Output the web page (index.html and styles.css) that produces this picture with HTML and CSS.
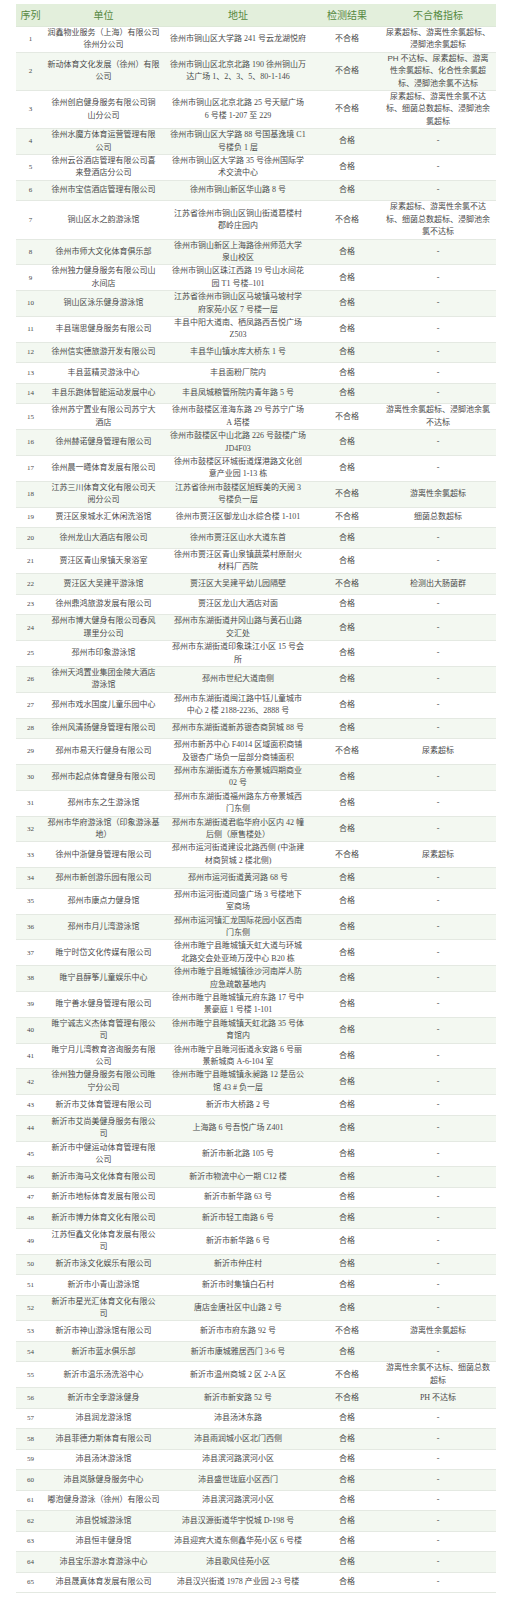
FILE: index.html
```html
<!DOCTYPE html>
<html lang="zh-CN">
<head>
<meta charset="utf-8">
<title>检测结果</title>
<link rel="stylesheet" href="styles.css">
</head>
<body>
<table class="report">
<colgroup>
<col class="c-no"><col class="c-unit"><col class="c-addr"><col class="c-res"><col class="c-ind">
</colgroup>
<thead>
<tr><th>序列</th><th>单位</th><th>地址</th><th>检测结果</th><th>不合格指标</th></tr>
</thead>
<tbody>
<tr><td class="no">1</td><td>润鑫物业服务（上海）有限公司<br>徐州分公司</td><td>徐州市铜山区大学路 241 号云龙湖悦府</td><td>不合格</td><td>尿素超标、游离性余氯超标、<br>浸脚池余氯超标</td></tr>
<tr><td class="no">2</td><td>新动体育文化发展（徐州）有限<br>公司</td><td>徐州市铜山区北京北路 190 徐州铜山万<br>达广场 1、2、3、5、80-1-146</td><td>不合格</td><td><span class="sans">PH</span> 不达标、尿素超标、游离<br>性余氯超标、化合性余氯超<br>标、浸脚池余氯不达标</td></tr>
<tr><td class="no">3</td><td>徐州创启健身服务有限公司铜<br>山分公司</td><td>徐州市铜山区北京北路 25 号天赋广场<br>6 号楼 1-207 至 229</td><td>不合格</td><td>尿素超标、游离性余氯不达<br>标、细菌总数超标、浸脚池余<br>氯超标</td></tr>
<tr><td class="no">4</td><td>徐州水魔方体育运营管理有限<br>公司</td><td>徐州市铜山区大学路 88 号国基逸境 C1<br>号楼负 1 层</td><td>合格</td><td>-</td></tr>
<tr><td class="no">5</td><td>徐州云谷酒店管理有限公司喜<br>来登酒店分公司</td><td>徐州市铜山区大学路 35 号徐州国际学<br>术交流中心</td><td>合格</td><td>-</td></tr>
<tr><td class="no">6</td><td>徐州市宝信酒店管理有限公司</td><td>徐州市铜山新区华山路 8 号</td><td>合格</td><td>-</td></tr>
<tr><td class="no">7</td><td>铜山区水之韵游泳馆</td><td>江苏省徐州市铜山区铜山街道葛楼村<br>郡岭庄园内</td><td>不合格</td><td>尿素超标、游离性余氯不达<br>标、细菌总数超标、浸脚池余<br>氯不达标</td></tr>
<tr><td class="no">8</td><td>徐州市师大文化体育俱乐部</td><td>徐州市铜山新区上海路徐州师范大学<br>泉山校区</td><td>合格</td><td>-</td></tr>
<tr><td class="no">9</td><td>徐州独力健身服务有限公司山<br>水间店</td><td>徐州市铜山区珠江西路 19 号山水间花<br>园 T1 号楼–101</td><td>合格</td><td>-</td></tr>
<tr><td class="no">10</td><td>铜山区泳乐健身游泳馆</td><td>江苏省徐州市铜山区马坡镇马坡村学<br>府家苑小区 7 号楼一层</td><td>合格</td><td>-</td></tr>
<tr><td class="no">11</td><td>丰县瑞思健身服务有限公司</td><td>丰县中阳大道南、栖凤路西吾悦广场<br>Z503</td><td>合格</td><td>-</td></tr>
<tr><td class="no">12</td><td>徐州信实德旅游开发有限公司</td><td>丰县华山镇水库大桥东 1 号</td><td>合格</td><td>-</td></tr>
<tr><td class="no">13</td><td>丰县蓝精灵游泳中心</td><td>丰县面粉厂院内</td><td>合格</td><td>-</td></tr>
<tr><td class="no">14</td><td>丰县乐跑体智能运动发展中心</td><td>丰县凤城粮管所院内青年路 5 号</td><td>合格</td><td>-</td></tr>
<tr><td class="no">15</td><td>徐州苏宁置业有限公司苏宁大<br>酒店</td><td>徐州市鼓楼区淮海东路 29 号苏宁广场<br>A 塔楼</td><td>不合格</td><td>游离性余氯超标、浸脚池余氯<br>不达标</td></tr>
<tr><td class="no">16</td><td>徐州赫诺健身管理有限公司</td><td>徐州市鼓楼区中山北路 226 号鼓楼广场<br>JD4F03</td><td>合格</td><td>-</td></tr>
<tr><td class="no">17</td><td>徐州晨一曦体育发展有限公司</td><td>徐州市鼓楼区环城街道煤港路文化创<br>意产业园 1-13 栋</td><td>合格</td><td>-</td></tr>
<tr><td class="no">18</td><td>江苏三川体育文化有限公司天<br>阅分公司</td><td>江苏省徐州市鼓楼区旭辉美的天阅 3<br>号楼负一层</td><td>不合格</td><td>游离性余氯超标</td></tr>
<tr><td class="no">19</td><td>贾汪区泉城水汇休闲洗浴馆</td><td>徐州市贾汪区御龙山水综合楼 1-101</td><td>不合格</td><td>细菌总数超标</td></tr>
<tr><td class="no">20</td><td>徐州龙山大酒店有限公司</td><td>徐州市贾汪区山水大道东首</td><td>合格</td><td>-</td></tr>
<tr><td class="no">21</td><td>贾汪区青山泉镇天泉浴室</td><td>徐州市贾汪区青山泉镇蔬菜村原耐火<br>材料厂西院</td><td>合格</td><td>-</td></tr>
<tr><td class="no">22</td><td>贾汪区大吴建平游泳馆</td><td>贾汪区大吴建平幼儿园隔壁</td><td>不合格</td><td>检测出大肠菌群</td></tr>
<tr><td class="no">23</td><td>徐州鼎鸿旅游发展有限公司</td><td>贾汪区龙山大酒店对面</td><td>合格</td><td>-</td></tr>
<tr><td class="no">24</td><td>邳州市博大健身有限公司春风<br>璟里分公司</td><td>邳州市东湖街道井冈山路与黄石山路<br>交汇处</td><td>合格</td><td>-</td></tr>
<tr><td class="no">25</td><td>邳州市印象游泳馆</td><td>邳州市东湖街道印象珠江小区 15 号会<br>所</td><td>合格</td><td>-</td></tr>
<tr><td class="no">26</td><td>徐州天鸿置业集团金陵大酒店<br>游泳馆</td><td>邳州市世纪大道南侧</td><td>合格</td><td>-</td></tr>
<tr><td class="no">27</td><td>邳州市戏水国度儿童乐园中心</td><td>邳州市东湖街道闽江路中钰儿童城市<br>中心 2 楼 2188-2236、2888 号</td><td>合格</td><td>-</td></tr>
<tr><td class="no">28</td><td>徐州风清扬健身管理有限公司</td><td>邳州市东湖街道新苏银杏商贸城 88 号</td><td>合格</td><td>-</td></tr>
<tr><td class="no">29</td><td>邳州市易天行健身有限公司</td><td>邳州市新苏中心 F4014 区域面积商铺<br>及银杏广场负一层部分商铺面积</td><td>不合格</td><td>尿素超标</td></tr>
<tr><td class="no">30</td><td>邳州市起点体育健身有限公司</td><td>邳州市东湖街道东方帝景城四期商业<br>02 号</td><td>合格</td><td>-</td></tr>
<tr><td class="no">31</td><td>邳州市东之生游泳馆</td><td>邳州市东湖街道福州路东方帝景城西<br>门东侧</td><td>合格</td><td>-</td></tr>
<tr><td class="no">32</td><td>邳州市华府游泳馆（印象游泳基<br>地）</td><td>邳州市东湖街道君临华府小区内 42 幢<br>后侧（原售楼处）</td><td>合格</td><td>-</td></tr>
<tr><td class="no">33</td><td>徐州中浙健身管理有限公司</td><td>邳州市运河街道建设北路西侧 (中浙建<br>材商贸城 2 楼北侧)</td><td>不合格</td><td>尿素超标</td></tr>
<tr><td class="no">34</td><td>邳州市新创游乐园有限公司</td><td>邳州市运河街道黄河路 68 号</td><td>合格</td><td>-</td></tr>
<tr><td class="no">35</td><td>邳州市康点力健身馆</td><td>邳州市运河街道同盛广场 3 号楼地下<br>室商场</td><td>合格</td><td>-</td></tr>
<tr><td class="no">36</td><td>邳州市月儿湾游泳馆</td><td>邳州市运河镇汇龙国际花园小区西南<br>门东侧</td><td>合格</td><td>-</td></tr>
<tr><td class="no">37</td><td>睢宁时岱文化传媒有限公司</td><td>徐州市睢宁县睢城镇天虹大道与环城<br>北路交会处亚琦万茂中心 B20 栋</td><td>合格</td><td>-</td></tr>
<tr><td class="no">38</td><td>睢宁县醇筝儿童娱乐中心</td><td>徐州市睢宁县睢城镇徐沙河南岸人防<br>应急疏散基地内</td><td>合格</td><td>-</td></tr>
<tr><td class="no">39</td><td>睢宁善水健身管理有限公司</td><td>徐州市睢宁县睢城镇元府东路 17 号中<br>景豪庭 1 号楼 1-101</td><td>合格</td><td>-</td></tr>
<tr><td class="no">40</td><td>睢宁诚志义杰体育管理有限公<br>司</td><td>徐州市睢宁县睢城镇天虹北路 35 号体<br>育馆内</td><td>合格</td><td>-</td></tr>
<tr><td class="no">41</td><td>睢宁月儿湾教育咨询服务有限<br>公司</td><td>徐州市睢宁县睢河街道永安路 6 号丽<br>景新城商 A-6-104 室</td><td>合格</td><td>-</td></tr>
<tr><td class="no">42</td><td>徐州独力健身服务有限公司睢<br>宁分公司</td><td>徐州市睢宁县睢城镇永昶路 12 楚岳公<br>馆 43 # 负一层</td><td>合格</td><td>-</td></tr>
<tr><td class="no">43</td><td>新沂市艾体育管理有限公司</td><td>新沂市大桥路 2 号</td><td>合格</td><td>-</td></tr>
<tr><td class="no">44</td><td>新沂市艾尚美健身服务有限公<br>司</td><td>上海路 6 号吾悦广场 Z401</td><td>合格</td><td>-</td></tr>
<tr><td class="no">45</td><td>新沂市中健运动体育管理有限<br>公司</td><td>新沂市新北路 105 号</td><td>合格</td><td>-</td></tr>
<tr><td class="no">46</td><td>新沂市海马文化体育有限公司</td><td>新沂市物流中心一期 C12 楼</td><td>合格</td><td>-</td></tr>
<tr><td class="no">47</td><td>新沂市地标体育发展有限公司</td><td>新沂市新华路 63 号</td><td>合格</td><td>-</td></tr>
<tr><td class="no">48</td><td>新沂市博力体育文化有限公司</td><td>新沂市轻工南路 6 号</td><td>合格</td><td>-</td></tr>
<tr><td class="no">49</td><td>江苏恒鑫文化体育发展有限公<br>司</td><td>新沂市新华路 6 号</td><td>合格</td><td>-</td></tr>
<tr><td class="no">50</td><td>新沂市泳文化娱乐有限公司</td><td>新沂市仲庄村</td><td>合格</td><td>-</td></tr>
<tr><td class="no">51</td><td>新沂市小青山游泳馆</td><td>新沂市时集镇白石村</td><td>合格</td><td>-</td></tr>
<tr><td class="no">52</td><td>新沂市星光汇体育文化有限公<br>司</td><td>唐店金唐社区中山路 2 号</td><td>合格</td><td>-</td></tr>
<tr><td class="no">53</td><td>新沂市神山游泳馆有限公司</td><td>新沂市市府东路 92 号</td><td>不合格</td><td>游离性余氯超标</td></tr>
<tr><td class="no">54</td><td>新沂市蓝水俱乐部</td><td>新沂市康城雅居西门 3-6 号</td><td>合格</td><td>-</td></tr>
<tr><td class="no">55</td><td>新沂市温乐汤洗浴中心</td><td>新沂市温州商城 2 区 2-A 区</td><td>不合格</td><td>游离性余氯不达标、细菌总数<br>超标</td></tr>
<tr><td class="no">56</td><td>新沂市全季游泳健身</td><td>新沂市新安路 52 号</td><td>不合格</td><td>PH 不达标</td></tr>
<tr><td class="no">57</td><td>沛县润龙游泳馆</td><td>沛县汤沐东路</td><td>合格</td><td>-</td></tr>
<tr><td class="no">58</td><td>沛县菲德力斯体育有限公司</td><td>沛县雨润城小区北门西侧</td><td>合格</td><td>-</td></tr>
<tr><td class="no">59</td><td>沛县汤沐游泳馆</td><td>沛县滨河路滨河小区</td><td>合格</td><td>-</td></tr>
<tr><td class="no">60</td><td>沛县岚脉健身服务中心</td><td>沛县盛世珑庭小区西门</td><td>合格</td><td>-</td></tr>
<tr><td class="no">61</td><td>嘟泡健身游泳（徐州）有限公司</td><td>沛县滨河路滨河小区</td><td>合格</td><td>-</td></tr>
<tr><td class="no">62</td><td>沛县悦城游泳馆</td><td>沛县汉源街道华宇悦城 D-198 号</td><td>合格</td><td>-</td></tr>
<tr><td class="no">63</td><td>沛县恒丰健身馆</td><td>沛县迎宾大道东侧鑫华苑小区 6 号楼</td><td>合格</td><td>-</td></tr>
<tr><td class="no">64</td><td>沛县宝乐游水育游泳中心</td><td>沛县歌风佳苑小区</td><td>合格</td><td>-</td></tr>
<tr><td class="no">65</td><td>沛县晟真体育发展有限公司</td><td>沛县汉兴街道 1978 产业园 2-3 号楼</td><td>合格</td><td>-</td></tr>
</tbody>
</table>
</body>
</html>
```
FILE: styles.css
```css
html, body {
  background: #ffffff;
}
body {
  margin: 4px 9px 0 16px;
  font-family: "Liberation Serif", "Noto Sans CJK SC", serif;
  color: #4a4a4a;
}
.report {
  width: 480px;
  table-layout: fixed;
  border-collapse: separate;
  border-spacing: 0;
}
.c-no { width: 29px; }
.c-unit { width: 117px; }
.c-addr { width: 152px; }
.c-res { width: 66px; }
.c-ind { width: 116px; }

.report th {
  background: #e3efdc;
  color: #55883f;
  font-family: "Noto Sans CJK SC", sans-serif;
  font-weight: normal;
  font-size: 10px;
  line-height: 14px;
  height: 22px;
  padding: 0;
  text-align: center;
  border-bottom: 1px solid #dde8d8;
}
.report td {
  font-size: 8px;
  line-height: 12.4px;
  height: 19.5px;
  padding: 0 2px;
  text-align: center;
  vertical-align: middle;
  white-space: nowrap;
  overflow: visible;
  border-bottom: 1px solid #e4e9e2;
}
.report td.no {
  font-size: 7px;
}
.report tbody tr:nth-child(even) td {
  background: #f3f8f1;
}
.sans {
  font-family: "Liberation Sans", "Noto Sans CJK SC", sans-serif;
}
```
